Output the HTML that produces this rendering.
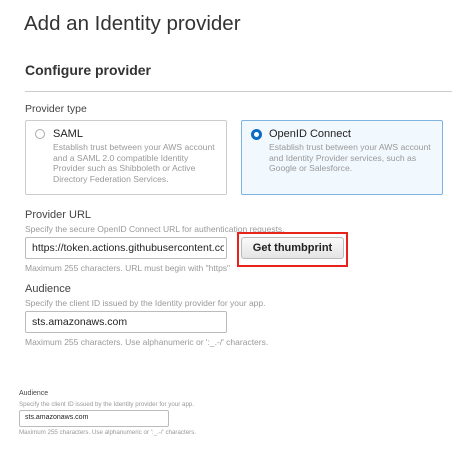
<!DOCTYPE html>
<html><head><style>
body{margin:0;width:471px;height:463px;background:#fff;font-family:"Liberation Sans",sans-serif;color:#222;position:relative;overflow:hidden}
.a{position:absolute;white-space:nowrap}
.g{color:#999}
.box{position:absolute;border:1px solid #ccc;border-radius:2px;box-sizing:border-box}
.in{position:absolute;border:1px solid #bbb;border-radius:2px;box-sizing:border-box;background:#fff}
</style></head><body>
<div class="a" style="left:24px;top:12px;font-size:20.5px;color:#333">Add an Identity provider</div>
<div class="a" style="left:25px;top:62px;font-size:14px;font-weight:bold;color:#333">Configure provider</div>
<div class="a" style="left:25px;top:91px;width:427px;height:1px;background:#ccc"></div>
<div class="a" style="left:25px;top:103px;font-size:10.5px;color:#444">Provider type</div>
<div class="box" style="left:25px;top:120px;width:202px;height:75px"></div>
<div class="a" style="left:35px;top:129px;width:10px;height:10px;border:1px solid #aaa;border-radius:50%;box-sizing:border-box"></div>
<div class="a" style="left:53px;top:128px;font-size:11px">SAML</div>
<div class="a g" style="left:53px;top:142px;font-size:8.6px;line-height:10.7px">Establish trust between your AWS account<br>and a SAML 2.0 compatible Identity<br>Provider such as Shibboleth or Active<br>Directory Federation Services.</div>
<div class="box" style="left:241px;top:120px;width:202px;height:75px;background:#f1f8fe;border-color:#80b3e0"></div>
<div class="a" style="left:251px;top:129px;width:11px;height:11px;border:3px solid #0a6bc4;border-radius:50%;box-sizing:border-box;background:#fff"></div>
<div class="a" style="left:269px;top:128px;font-size:11px">OpenID Connect</div>
<div class="a g" style="left:269px;top:142px;font-size:8.6px;line-height:10.7px">Establish trust between your AWS account<br>and Identity Provider services, such as<br>Google or Salesforce.</div>
<div class="a" style="left:25px;top:209px;font-size:11px;color:#444">Provider URL</div>
<div class="a g" style="left:25px;top:224px;font-size:8.5px">Specify the secure OpenID Connect URL for authentication requests.</div>
<div class="in" style="left:25px;top:237px;width:202px;height:22px"></div>
<div class="a" style="left:32px;top:242px;font-size:10.5px;width:192px;overflow:hidden">https://token.actions.githubusercontent.co</div>
<div class="a" style="left:237px;top:232px;width:111px;height:35px;border:2px solid #e8241a;box-sizing:border-box"></div>
<div class="a" style="left:241px;top:237px;width:103px;height:22px;border:1px solid #bbb;border-radius:3px;box-sizing:border-box;background:linear-gradient(#fafafa,#e4e4e4);font-size:11px;font-weight:bold;text-align:center;line-height:20px">Get thumbprint</div>
<div class="a g" style="left:25px;top:263px;font-size:8.5px">Maximum 255 characters. URL must begin with "https"</div>
<div class="a" style="left:25px;top:283px;font-size:11px;color:#444">Audience</div>
<div class="a g" style="left:25px;top:298px;font-size:8.5px">Specify the client ID issued by the Identity provider for your app.</div>
<div class="in" style="left:25px;top:311px;width:202px;height:22px"></div>
<div class="a" style="left:32px;top:316px;font-size:10.5px">sts.amazonaws.com</div>
<div class="a g" style="left:25px;top:337px;font-size:8.5px">Maximum 255 characters. Use alphanumeric or ':_.-/' characters.</div>
<div class="a" style="left:19px;top:390px;font-size:7px;color:#444">Audience</div>
<div class="a g" style="left:19px;top:401px;font-size:6.2px">Specify the client ID issued by the Identity provider for your app.</div>
<div class="in" style="left:19px;top:410px;width:150px;height:17px"></div>
<div class="a" style="left:25px;top:414px;font-size:7px">sts.amazonaws.com</div>
<div class="a g" style="left:19px;top:429px;font-size:6.2px">Maximum 255 characters. Use alphanumeric or ':_.-/' characters.</div>
</body></html>
